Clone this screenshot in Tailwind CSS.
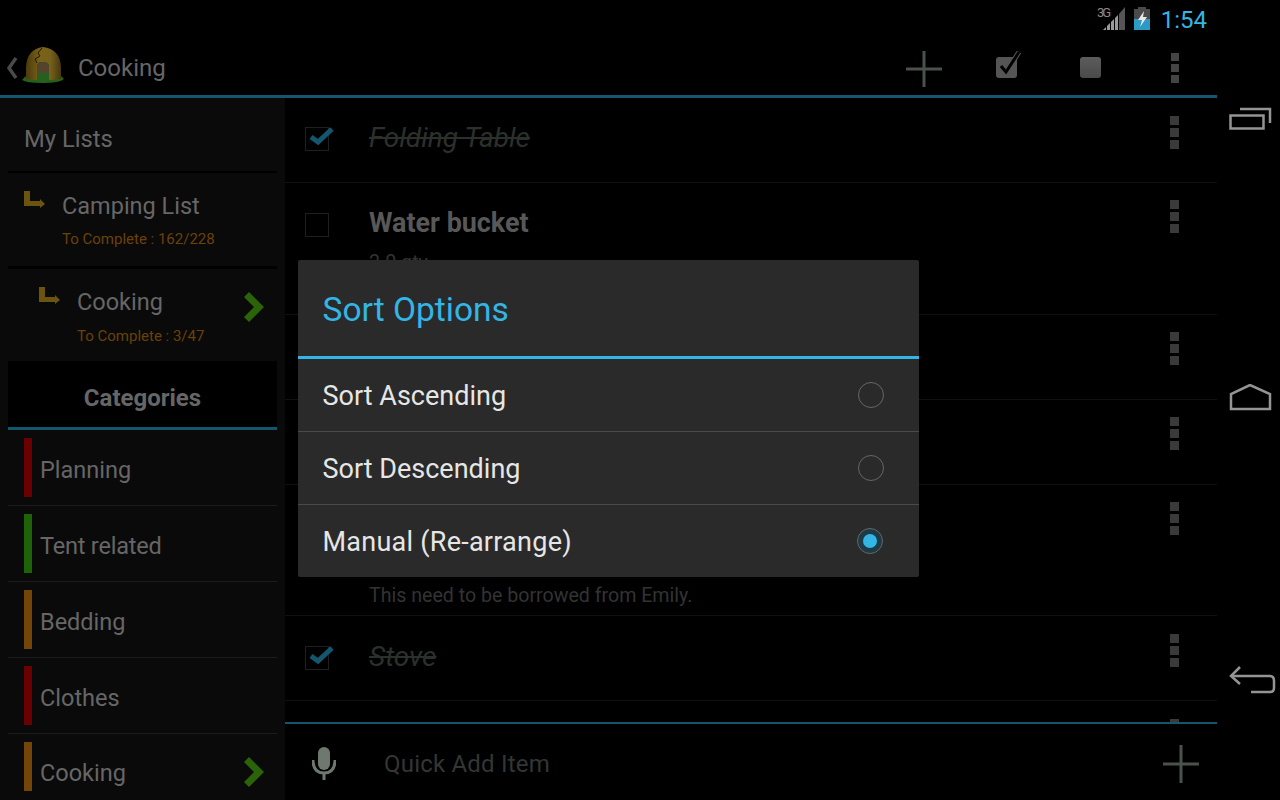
<!DOCTYPE html>
<html lang="en">
<head>
    <meta charset="UTF-8">
    <title>Cooking</title>
    <script src="https://cdn.jsdelivr.net/npm/@tailwindcss/browser@4"></script>
</head>
<body class="bg-black overflow-hidden">
<div class="relative w-[1280px] h-[800px] flex bg-black font-['Roboto',sans-serif] overflow-hidden">

    <!-- Main column -->
    <div class="w-[1217px] h-[800px] flex flex-col shrink-0">

        <!-- Status bar -->
        <div class="h-[40px] shrink-0 flex justify-end items-start pr-[10px]">
            <svg class="mt-[3px]" width="29" height="28" viewBox="0 -4 29 28">
                <text x="0" y="10" font-family="Roboto" font-size="13" fill="#8a8a8a" textLength="14">3G</text>
                <path d="M6 23 L9 20 V23Z" fill="#9a9a9a"/>
                <path d="M10 23 V19 L13 16 V23Z" fill="#9a9a9a"/>
                <path d="M14 23 V15 L17 12 V23Z" fill="#9a9a9a"/>
                <path d="M18 23 V11 L21 8 V23Z" fill="#9a9a9a"/>
                <path d="M22 23 V7 L28 0 V23Z" fill="#555555"/>
            </svg>
            <svg class="ml-[8px] mt-[7px]" width="17" height="24" viewBox="0 0 17 24">
                <path d="M4 0 H12 V2 H16 V12 H0 V2 H4Z" fill="#4a4a4a"/>
                <rect x="0" y="12" width="16" height="11" fill="#2b9ac4"/>
                <path d="M10 4 L4 13 H8 L6 20 L13 10 H9Z" fill="#e8e8e8"/>
            </svg>
            <span class="ml-[10px] mt-[6px] text-[24px] leading-[28px] text-[#33b5e5]">1:54</span>
        </div>

        <!-- Action bar -->
        <div class="h-[55px] shrink-0 flex items-center">
            <svg class="ml-[6px]" width="12" height="22" viewBox="0 0 12 22"><path d="M10 1 L3 11 L10 21" fill="none" stroke="#4a4a4a" stroke-width="3.5"/></svg>
            <svg class="ml-[4px] self-start mt-[7px]" width="42" height="37" viewBox="0 0 42 37">
                <defs>
                    <linearGradient id="dome" x1="0" y1="0" x2="1" y2="0">
                        <stop offset="0" stop-color="#4a3a0a"/>
                        <stop offset="0.4" stop-color="#7a6218"/>
                        <stop offset="0.7" stop-color="#75601c"/>
                        <stop offset="1" stop-color="#46380c"/>
                    </linearGradient>
                </defs>
                <path d="M0 33 Q3 29 6 28 H36 Q40 29 42 32 Q38 36 21 36 Q4 36 0 33Z" fill="#25601c"/>
                <path d="M4 32 V20 Q5 2 21 0 Q38 2 39 20 V32 L27 33 V20 Q26 15 21 15 Q15 15 15 20 V33Z" fill="url(#dome)"/>
                <path d="M15 33 V20 Q15 15 21 15 Q26 15 27 20 V33Z" fill="#25601c"/>
                <path d="M15 26 V20 Q15 15 21 15 Q26 15 27 20 V26Z" fill="#54442e"/>
                <path d="M20 1 L16 6 L18 9 L13 12 L15 16" fill="none" stroke="#1e1704" stroke-width="1"/>
            </svg>
            <span class="ml-[14px] mt-[1px] text-[24px] leading-[30px] text-[#666666]">Cooking</span>
            <svg class="ml-auto mt-[3px]" width="36" height="36" viewBox="0 0 36 36"><path d="M18 0 V36 M0 18 H36" stroke="#4b524b" stroke-width="3"/></svg>
            <svg class="ml-[54px] -mt-[3px]" width="25" height="30" viewBox="0 0 25 30">
                <rect x="0" y="6" width="21" height="21" rx="3" fill="#555555"/>
                <path d="M5 15 L10 21 L23 1" fill="none" stroke="#555555" stroke-width="5"/>
                <path d="M5 15 L10 21 L23 1" fill="none" stroke="#000000" stroke-width="3"/>
            </svg>
            <div class="ml-[59px] w-[21px] h-[21px] rounded-[3px] bg-linear-to-b from-[#5c5c5c] to-[#4a4a4a]"></div>
            <div class="ml-[70px] mr-[38px] flex flex-col gap-[3px]">
                <div class="w-[8px] h-[8px] bg-[#444444]"></div>
                <div class="w-[8px] h-[8px] bg-[#444444]"></div>
                <div class="w-[8px] h-[8px] bg-[#444444]"></div>
            </div>
        </div>
        <div class="h-[3px] shrink-0 bg-[#15566f]"></div>

        <!-- Body -->
        <div class="flex-1 min-h-0 flex">

            <!-- Sidebar -->
            <aside class="w-[285px] shrink-0 bg-[#0a0a0a] px-[8px] overflow-hidden">
                <div class="h-[75px] pt-[11px] flex items-center pl-[16px] text-[23.8px] text-[#666666] border-b-2 border-black">My Lists</div>

                <div class="h-[96px] pl-[16px] pt-[18px] flex items-start border-b-3 border-black">
                    <svg width="22" height="18" viewBox="0 0 22 18"><path d="M0 0 H6 V10 H16 V8 L21 13 L16 17 V15 H0Z" fill="#6b5310"/></svg>
                    <div class="ml-[16px]">
                        <div class="text-[23.5px] leading-[30px] text-[#666666]">Camping List</div>
                        <div class="mt-[8px] text-[15px] leading-[20px] text-[#6b4108]">To Complete : 162/228</div>
                    </div>
                </div>

                <div class="h-[92px] pl-[31px] pt-[18px] pr-[13px] flex items-start">
                    <svg width="22" height="18" viewBox="0 0 22 18"><path d="M0 0 H6 V10 H16 V8 L21 13 L16 17 V15 H0Z" fill="#6b5310"/></svg>
                    <div class="ml-[16px]">
                        <div class="text-[23.5px] leading-[30px] text-[#666666]">Cooking</div>
                        <div class="mt-[9px] text-[15px] leading-[20px] text-[#6b4108]">To Complete : 3/47</div>
                    </div>
                    <svg class="ml-auto mt-[5px]" width="20" height="30" viewBox="0 0 20 30"><path d="M0 5 L5 0 L20 15 L5 30 L0 25 L10 15Z" fill="#2a6308"/></svg>
                </div>

                <div class="h-[69px] pt-[7px] bg-black flex items-center justify-center text-[24px] font-bold text-[#666666] border-b-3 border-[#15566f]">Categories</div>

                <div class="h-[76px] flex items-center border-b border-[#1c1c1c] pl-[16px]">
                    <div class="w-[8px] h-[59px] bg-[#6b0000]"></div>
                    <span class="ml-[8px] mt-[6px] text-[23.5px] text-[#666666]">Planning</span>
                </div>
                <div class="h-[76px] flex items-center border-b border-[#1c1c1c] pl-[16px]">
                    <div class="w-[8px] h-[59px] bg-[#1f6308]"></div>
                    <span class="ml-[8px] mt-[6px] text-[23.5px] tracking-[-0.2px] text-[#666666]">Tent related</span>
                </div>
                <div class="h-[76px] flex items-center border-b border-[#1c1c1c] pl-[16px]">
                    <div class="w-[8px] h-[59px] bg-[#744508]"></div>
                    <span class="ml-[8px] mt-[6px] text-[23.5px] text-[#666666]">Bedding</span>
                </div>
                <div class="h-[76px] flex items-center border-b border-[#1c1c1c] pl-[16px]">
                    <div class="w-[8px] h-[59px] bg-[#6b0000]"></div>
                    <span class="ml-[8px] mt-[6px] text-[23.5px] text-[#666666]">Clothes</span>
                </div>
                <div class="h-[66px] flex items-start pt-[8px] pl-[16px] pr-[13px]">
                    <div class="w-[8px] h-[49px] bg-[#744508]"></div>
                    <span class="ml-[8px] mt-[16px] text-[23.5px] leading-[30px] text-[#666666]">Cooking</span>
                    <svg class="ml-auto mt-[15px]" width="20" height="30" viewBox="0 0 20 30"><path d="M0 5 L5 0 L20 15 L5 30 L0 25 L10 15Z" fill="#2a6308"/></svg>
                </div>
            </aside>

            <!-- List -->
            <main class="flex-1 min-w-0 flex flex-col">
                <div class="h-[624px] shrink-0 overflow-hidden">
                    <div class="h-[85px] flex items-start border-b border-[#101010] pl-[20px] pr-[38px]">
                        <div class="relative mt-[29px] w-[24px] h-[24px] border border-[#1f1f1f]">
                            <svg class="absolute -top-[6px] left-[3px]" width="26" height="24" viewBox="0 0 26 24"><path d="M2 15 L9 20 L23 7" fill="none" stroke="#15566f" stroke-width="5"/></svg>
                        </div>
                        <div class="ml-[40px] mt-[23px] text-[28px] leading-[34px] italic line-through text-[#2b302b]">Folding Table</div>
                        <div class="ml-auto mt-[18px] flex flex-col gap-[3px]">
                            <div class="w-[9px] h-[9px] bg-[#3a3a3a]"></div><div class="w-[9px] h-[9px] bg-[#3a3a3a]"></div><div class="w-[9px] h-[9px] bg-[#3a3a3a]"></div>
                        </div>
                    </div>
                    <div class="h-[132px] flex items-start border-b border-[#101010] pl-[20px] pr-[38px]">
                        <div class="mt-[30px] w-[24px] h-[24px] border border-[#1f1f1f]"></div>
                        <div class="ml-[40px] mt-[23px]">
                            <div class="text-[26.9px] leading-[34px] font-bold text-[#585858]">Water bucket</div>
                            <div class="mt-[11px] text-[19.6px] leading-[24px] text-[#333333]">2.0 qty</div>
                        </div>
                        <div class="ml-auto mt-[17px] flex flex-col gap-[3px]">
                            <div class="w-[9px] h-[9px] bg-[#3a3a3a]"></div><div class="w-[9px] h-[9px] bg-[#3a3a3a]"></div><div class="w-[9px] h-[9px] bg-[#3a3a3a]"></div>
                        </div>
                    </div>
                    <div class="h-[85px] flex justify-end border-b border-[#101010] pr-[38px]">
                        <div class="mt-[17px] flex flex-col gap-[3px]">
                            <div class="w-[9px] h-[9px] bg-[#3a3a3a]"></div><div class="w-[9px] h-[9px] bg-[#3a3a3a]"></div><div class="w-[9px] h-[9px] bg-[#3a3a3a]"></div>
                        </div>
                    </div>
                    <div class="h-[85px] flex justify-end border-b border-[#101010] pr-[38px]">
                        <div class="mt-[17px] flex flex-col gap-[3px]">
                            <div class="w-[9px] h-[9px] bg-[#3a3a3a]"></div><div class="w-[9px] h-[9px] bg-[#3a3a3a]"></div><div class="w-[9px] h-[9px] bg-[#3a3a3a]"></div>
                        </div>
                    </div>
                    <div class="h-[131px] flex items-start border-b border-[#101010] pl-[84px] pr-[38px]">
                        <div class="mt-[99px] text-[19.6px] leading-[24px] text-[#333333]">This need to be borrowed from Emily.</div>
                        <div class="ml-auto mt-[17px] flex flex-col gap-[3px]">
                            <div class="w-[9px] h-[9px] bg-[#3a3a3a]"></div><div class="w-[9px] h-[9px] bg-[#3a3a3a]"></div><div class="w-[9px] h-[9px] bg-[#3a3a3a]"></div>
                        </div>
                    </div>
                    <div class="h-[85px] flex items-start border-b border-[#101010] pl-[20px] pr-[38px]">
                        <div class="relative mt-[30px] w-[24px] h-[24px] border border-[#1f1f1f]">
                            <svg class="absolute -top-[6px] left-[3px]" width="26" height="24" viewBox="0 0 26 24"><path d="M2 15 L9 20 L23 7" fill="none" stroke="#15566f" stroke-width="5"/></svg>
                        </div>
                        <div class="ml-[40px] mt-[24px] text-[28px] leading-[34px] italic line-through text-[#2b302b]">Stove</div>
                        <div class="ml-auto mt-[18px] flex flex-col gap-[3px]">
                            <div class="w-[9px] h-[9px] bg-[#3a3a3a]"></div><div class="w-[9px] h-[9px] bg-[#3a3a3a]"></div><div class="w-[9px] h-[9px] bg-[#3a3a3a]"></div>
                        </div>
                    </div>
                    <div class="flex justify-end pr-[38px]">
                        <div class="mt-[18px] w-[9px] h-[9px] bg-[#3a3a3a]"></div>
                    </div>
                </div>
                <div class="h-[2px] shrink-0 bg-[#15566f]"></div>

                <!-- Quick add -->
                <div class="flex-1 flex items-center">
                    <svg class="ml-[27px] mt-[2px]" width="24" height="33" viewBox="0 0 24 33">
                        <rect x="6" y="0" width="12" height="23" rx="6" fill="#6f786f"/>
                        <path d="M1 13 Q1 26 12 26 Q23 26 23 13" fill="none" stroke="#6f786f" stroke-width="3"/>
                        <rect x="10.5" y="25" width="3" height="8" fill="#6f786f"/>
                    </svg>
                    <span class="ml-[48px] mt-[3px] text-[24px] tracking-[0.2px] text-[#333633]">Quick Add Item</span>
                    <svg class="ml-auto mr-[18px] mt-[3px]" width="36" height="38" viewBox="0 0 36 38"><path d="M18 0 V38 M0 19 H36" stroke="#4b524b" stroke-width="3"/></svg>
                </div>
            </main>
        </div>
    </div>

    <!-- Nav bar -->
    <div class="w-[63px] h-[800px] shrink-0 flex flex-col items-start pl-[12px]">
        <svg class="mt-[107px]" width="44" height="24" viewBox="0 0 44 24" fill="none" stroke="#949494" stroke-width="2.5">
            <path d="M11 2 H41 V16"/>
            <rect x="1.5" y="8.5" width="33" height="13"/>
        </svg>
        <svg class="mt-[253px]" width="44" height="28" viewBox="0 0 44 28" fill="none" stroke="#949494" stroke-width="2.5">
            <path d="M2 25 V10 L21 1 L41 10 V25 Z"/>
        </svg>
        <svg class="mt-[253px]" width="48" height="30" viewBox="0 0 48 30" fill="none" stroke="#949494" stroke-width="2.5">
            <path d="M11 2 L2 11 L11 19"/>
            <path d="M2 11 H41 Q45 11 45 16 V23 Q45 27 41 27 H22"/>
        </svg>
    </div>

    <!-- Sort dialog -->
    <div class="absolute left-[298px] top-[260px] w-[621px] h-[317px] bg-[#2a2a2a] rounded-[2px] flex flex-col">
        <div class="h-[96px] shrink-0 pt-[4px] flex items-center pl-[24.5px] text-[33.5px] text-[#33b5e5]">Sort Options</div>
        <div class="h-[3px] shrink-0 bg-[#33b5e5]"></div>
        <div class="h-[73px] shrink-0 pt-[3px] flex items-center pl-[24.5px] pr-[35px] border-b border-[#4a4a4a] text-[27px] text-[#e6e6e6]">
            <span>Sort Ascending</span>
            <div class="ml-auto w-[26px] h-[26px] -mt-[3px] rounded-full border border-[#666666]"></div>
        </div>
        <div class="h-[73px] shrink-0 pt-[3px] flex items-center pl-[24.5px] pr-[35px] border-b border-[#4a4a4a] text-[27px] text-[#e6e6e6]">
            <span>Sort Descending</span>
            <div class="ml-auto w-[26px] h-[26px] -mt-[3px] rounded-full border border-[#666666]"></div>
        </div>
        <div class="flex-1 pt-[3px] flex items-center pl-[24.5px] pr-[36px] text-[27px] text-[#e6e6e6]">
            <span class="tracking-[0.25px]">Manual (Re-arrange)</span>
            <div class="ml-auto w-[26px] h-[26px] -mt-[3px] rounded-full border border-[#666666] bg-[#1e3a46] flex items-center justify-center">
                <div class="w-[14px] h-[14px] rounded-full bg-[#33b5e5]"></div>
            </div>
        </div>
    </div>
</div>
</body>
</html>
